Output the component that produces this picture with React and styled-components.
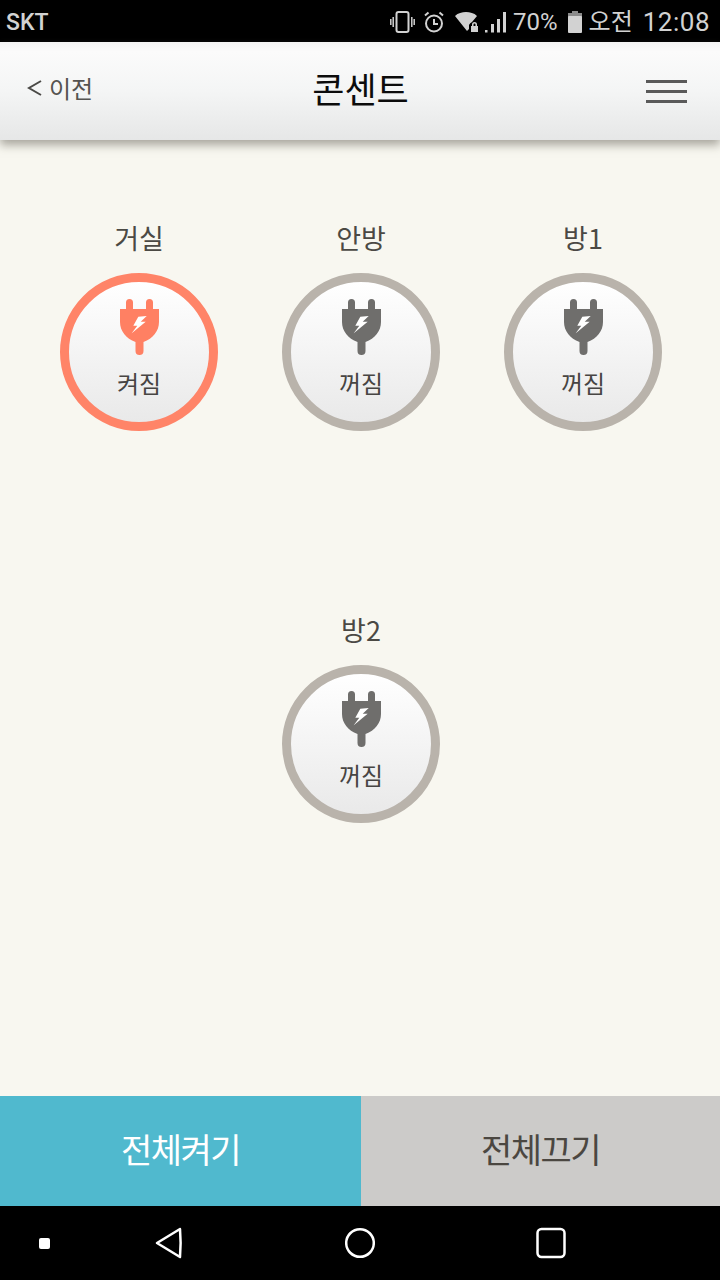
import React from 'react';
import styled, { createGlobalStyle } from 'styled-components';

const KO = `"Noto Sans CJK KR", "Noto Sans", sans-serif`;

const GlobalStyle = createGlobalStyle`
  html, body {
    margin: 0;
    padding: 0;
    background: #f8f7f0;
  }
  * { box-sizing: border-box; }
`;

const Screen = styled.div`
  display: flex;
  flex-direction: column;
  width: 720px;
  height: 1280px;
  overflow: hidden;
  background: #f8f7f0;
  font-family: ${KO};
`;

const StatusBar = styled.div`
  display: flex;
  align-items: center;
  justify-content: space-between;
  flex: 0 0 42px;
  padding: 2px 10px 0 6px;
  background: #000;
  color: #d2d2d2;
`;

const Carrier = styled.span`
  font-family: "Roboto", sans-serif;
  font-weight: 500;
  font-size: 23px;
`;

const StatusRight = styled.div`
  display: flex;
  align-items: center;
`;

const StatusIcon = styled.svg`
  display: block;
  margin-right: ${({ $gap }) => $gap || 0}px;
`;

const StatusText = styled.span`
  font-family: "Roboto", ${KO};
  font-size: ${({ $size }) => $size || 24}px;
  letter-spacing: ${({ $spacing }) => $spacing || 0}px;
  line-height: 30px;
  margin-right: ${({ $gap }) => $gap || 0}px;
`;

const Header = styled.header`
  position: relative;
  z-index: 1;
  display: flex;
  align-items: center;
  flex: 0 0 98px;
  padding: 0 33px 0 27px;
  background: linear-gradient(#f3f3f3 0, #fbfbfb 10%, #f4f5f5 50%, #e6e7e7 100%);
  box-shadow: 0 5px 9px rgba(90, 85, 75, 0.5);
`;

const BackLink = styled.a`
  flex: 1;
  display: flex;
  align-items: center;
  gap: 7px;
  margin-bottom: 6px;
  color: #555350;
  font-size: 24px;
  line-height: 30px;
  text-decoration: none;
`;

const BackMark = styled.svg`
  display: block;
`;

const Title = styled.h1`
  margin: 0 0 6px 7px;
  color: #0c0c0c;
  font-size: 35px;
  font-weight: 400;
  line-height: 44px;
`;

const MenuButton = styled.div`
  flex: 1;
  display: flex;
  flex-direction: column;
  align-items: flex-end;
  gap: 7px;
  margin-top: 1px;
`;

const MenuLine = styled.span`
  display: block;
  width: 41px;
  height: 3px;
  background: #5a5a5a;
`;

const Content = styled.main`
  flex: 1;
  display: flex;
  flex-wrap: wrap;
  justify-content: center;
  align-content: flex-start;
  padding: 78px 26px 0 28px;
`;

const Outlet = styled.div`
  display: flex;
  flex-direction: column;
  align-items: center;
  width: 222px;
  height: 392px;
`;

const RoomName = styled.div`
  color: #4b4944;
  font-size: 27px;
  line-height: 40px;
  margin-bottom: 15px;
`;

const Dial = styled.div`
  display: flex;
  flex-direction: column;
  align-items: center;
  width: 158px;
  height: 158px;
  padding-top: 17px;
  border-radius: 50%;
  border: 9px solid ${({ $on }) => ($on ? '#ff8468' : '#b9b3ab')};
  background: linear-gradient(#ffffff 0%, #e9e9e9 100%);
`;

const PlugIcon = styled.svg`
  display: block;
  color: ${({ $on }) => ($on ? '#ff8063' : '#6f6e6c')};
`;

const StateText = styled.div`
  color: #474543;
  font-size: 24px;
  line-height: 32px;
  margin-top: 12px;
`;

const ActionBar = styled.div`
  display: flex;
  flex: 0 0 110px;
`;

const ActionButton = styled.button`
  flex: 0 0 ${({ $primary }) => ($primary ? 361 : 359)}px;
  border: 0;
  padding: 0 0 5px;
  background: ${({ $primary }) => ($primary ? '#50b9ce' : '#cccbc9')};
  color: ${({ $primary }) => ($primary ? '#ffffff' : '#4b4741')};
  font-family: ${KO};
  font-size: 34px;
  letter-spacing: -1.5px;
`;

const NavBar = styled.nav`
  position: relative;
  display: flex;
  align-items: center;
  justify-content: center;
  gap: 161px;
  flex: 0 0 74px;
  background: #000;
`;

const NavDot = styled.span`
  position: absolute;
  left: 39px;
  top: 32px;
  width: 11px;
  height: 11px;
  border-radius: 2px;
  background: #fff;
`;

const NavIcon = styled.svg`
  display: block;
`;

const Plug = ({ on }) => (
  <PlugIcon $on={on} width="39" height="56" viewBox="0 0 39 56">
    <path
      fill="currentColor"
      d="M6 3.500a3.500 3.500 0 0 1 7 0V10h13V3.500a3.500 3.500 0 0 1 7 0V10h6v13c0 9-6 16.500-15.500 20v9a4 4 0 0 1-8 0v-9C6 39.500 0 32 0 23V10h6z"
    />
    <path fill="#fff" d="M18.300 17.700 L26.700 17 L20.700 22.700 L25.700 22.700 L11.700 34.300 L17.300 26.700 L13.300 26.700 Z" />
  </PlugIcon>
);

const Room = ({ name, on }) => (
  <Outlet>
    <RoomName>{name}</RoomName>
    <Dial $on={on}>
      <Plug on={on} />
      <StateText>{on ? '켜짐' : '꺼짐'}</StateText>
    </Dial>
  </Outlet>
);

const App = () => (
  <Screen>
    <GlobalStyle />
    <StatusBar>
      <Carrier>SKT</Carrier>
      <StatusRight>
        <StatusIcon $gap={9} width="25" height="22" viewBox="0 0 25 22" fill="none" stroke="#d2d2d2">
          <rect x="6.500" y="1" width="12" height="20" rx="2" strokeWidth="2" />
          <path d="M3.200 6v10M.8 8v6M21.800 6v10M24.200 8v6" strokeWidth="1.500" />
        </StatusIcon>
        <StatusIcon $gap={11} width="20" height="22" viewBox="0 0 20 22" fill="none" stroke="#d2d2d2" strokeWidth="2">
          <circle cx="10" cy="12.500" r="8" />
          <path d="M10 8v5h4M1 4.500 4.500 1.500M19 4.500 15.500 1.500" />
        </StatusIcon>
        <StatusIcon $gap={5} width="25" height="22" viewBox="0 0 25 22" fill="#d2d2d2">
          <path d="M0 5C3 2 7 1 11 1s8 1 11 4l-5 6a6 6 0 0 0-3 3v4l-2 2z" />
          <path d="M17 15v-1.500a2.500 2.500 0 0 1 5 0V15h1v6h-7v-6zm1.500 0h2v-1.500a1 1 0 0 0-2 0z" />
        </StatusIcon>
        <StatusIcon $gap={7} width="21" height="22" viewBox="0 0 21 22" fill="#d2d2d2">
          <rect x="0" y="19" width="2.500" height="2.500" />
          <rect x="6" y="13" width="3" height="8.500" />
          <rect x="12" y="8" width="3" height="13.500" />
          <rect x="18" y="1" width="3" height="20.500" />
        </StatusIcon>
        <StatusText $gap={10}>70%</StatusText>
        <StatusIcon $gap={7} width="14" height="22" viewBox="0 0 14 22" fill="#d2d2d2">
          <path fill="#8a8a8a" d="M4 0h6v2h4v6H0V2h4z" />
          <rect x="0" y="5" width="14" height="17" rx="1" />
        </StatusIcon>
        <StatusText $gap={10}>오전</StatusText>
        <StatusText $size={26} $spacing={0.5}>12:08</StatusText>
      </StatusRight>
    </StatusBar>

    <Header>
      <BackLink href="#">
        <BackMark width="15" height="18" viewBox="0 0 15 18" fill="none" stroke="#4a4946" strokeWidth="2">
          <path d="M14 2 2 9l12 7" />
        </BackMark>
        이전
      </BackLink>
      <Title>콘센트</Title>
      <MenuButton>
        <MenuLine />
        <MenuLine />
        <MenuLine />
      </MenuButton>
    </Header>

    <Content>
      <Room name="거실" on />
      <Room name="안방" />
      <Room name="방1" />
      <Room name="방2" />
    </Content>

    <ActionBar>
      <ActionButton $primary>전체켜기</ActionButton>
      <ActionButton>전체끄기</ActionButton>
    </ActionBar>

    <NavBar>
      <NavDot />
      <NavIcon width="30" height="32" viewBox="0 0 30 32" fill="none" stroke="#fff" strokeWidth="2.500" strokeLinejoin="round">
        <path d="M26 2 3 16l23 14c.8-9 .8-19 0-28z" />
      </NavIcon>
      <NavIcon width="30" height="32" viewBox="0 0 30 32" fill="none" stroke="#fff" strokeWidth="2.500">
        <circle cx="15" cy="16" r="13.800" />
      </NavIcon>
      <NavIcon width="30" height="32" viewBox="0 0 30 32" fill="none" stroke="#fff" strokeWidth="2.500">
        <rect x="1.500" y="2" width="27" height="28" rx="4" />
      </NavIcon>
    </NavBar>
  </Screen>
);

export default App;
